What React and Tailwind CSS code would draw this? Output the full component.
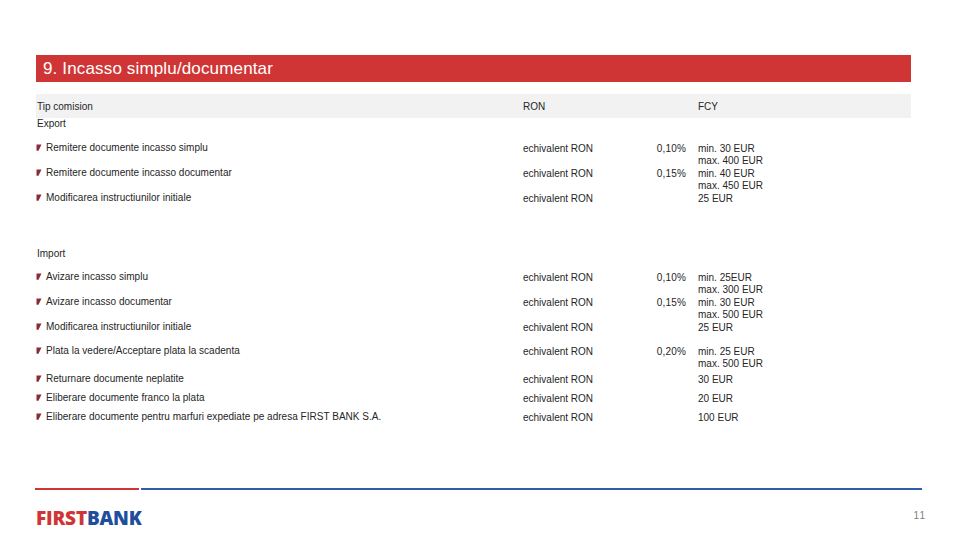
const rowsExport = [
  { name: "Remitere documente incasso simplu", pct: "0,10%", fcy: ["min. 30 EUR", "max. 400 EUR"], h: "h-[25px]" },
  { name: "Remitere documente incasso documentar", pct: "0,15%", fcy: ["min. 40 EUR", "max. 450 EUR"], h: "h-[25px]" },
  { name: "Modificarea instructiunilor initiale", pct: "", fcy: ["25 EUR"], h: "h-[25px]" },
];

const rowsImport = [
  { name: "Avizare incasso simplu", pct: "0,10%", fcy: ["min. 25EUR", "max. 300 EUR"], h: "h-[25px]" },
  { name: "Avizare incasso documentar", pct: "0,15%", fcy: ["min. 30 EUR", "max. 500 EUR"], h: "h-[25px]" },
  { name: "Modificarea instructiunilor initiale", pct: "", fcy: ["25 EUR"], h: "h-[24px]" },
  { name: "Plata la vedere/Acceptare plata la scadenta", pct: "0,20%", fcy: ["min. 25 EUR", "max. 500 EUR"], h: "h-[28px]" },
  { name: "Returnare documente neplatite", pct: "", fcy: ["30 EUR"], h: "h-[19px]" },
  { name: "Eliberare documente franco la plata", pct: "", fcy: ["20 EUR"], h: "h-[19px]" },
  { name: "Eliberare documente pentru marfuri expediate pe adresa FIRST BANK S.A.", pct: "", fcy: ["100 EUR"], h: "h-[19px]" },
];

function Bullet() {
  return (
    <svg width="6" height="7" viewBox="0 0 6 7" className="shrink-0 mt-[2px]">
      <polygon points="0.5,0.5 5.5,0.5 2.5,6.8 0.5,6.8" fill="#8a2c36" />
    </svg>
  );
}

function Row({ row }) {
  return (
    <div className={`grid grid-cols-[487px_117px_46px_1fr] ${row.h} leading-[12.4px]`}>
      <div className="flex items-start gap-[4px] -mt-[1px]">
        <Bullet />
        <span className="tracking-[0.02px]">{row.name}</span>
      </div>
      <div>echivalent RON</div>
      <div className="text-right tracking-[0.2px]">{row.pct}</div>
      <div className="pl-[12px] whitespace-nowrap">
        {row.fcy.map((line) => (
          <div key={line}>{line}</div>
        ))}
      </div>
    </div>
  );
}

export default function App() {
  return (
    <div className="w-[960px] h-[540px] bg-white overflow-hidden flex flex-col pt-[55px] font-['Liberation_Sans',Arial,sans-serif] text-[10px] leading-[12.4px] text-[#262626]">
      <div className="mx-[36px] w-[875px] h-[27px] pt-[1px] bg-[#d03535] flex items-center pl-[7px] text-[17px] tracking-[0.15px] text-white">
        9. Incasso simplu/documentar
      </div>

      <div className="mx-[36px] w-[875px] mt-[12px] h-[24px] pt-[2px] bg-[#f2f2f2] grid grid-cols-[487px_175px_1fr] items-center">
        <div className="pl-[1px]">Tip comision</div>
        <div>RON</div>
        <div>FCY</div>
      </div>

      <div className="mx-[36px] w-[875px] flex flex-col">
        <div className="pl-[1px] h-[25px]">Export</div>
        {rowsExport.map((row, i) => (
          <Row key={i} row={row} />
        ))}
        <div className="pl-[1px] h-[24px] mt-[30px]">Import</div>
        {rowsImport.map((row, i) => (
          <Row key={i} row={row} />
        ))}
      </div>

      <div className="flex-1" />

      <div className="flex items-center gap-[2px] ml-[35px] w-[887px]">
        <div className="w-[104px] h-[2px] bg-[#d03535]" />
        <div className="flex-1 h-[2px] bg-[#2f5da8]" />
      </div>

      <div className="ml-[36px] mr-[34px] mt-[17px] mb-[10px] flex items-center justify-between h-[23px]">
        <div className="font-['Open_Sans',sans-serif] font-extrabold text-[19px] tracking-[-0.2px] leading-none">
          <span className="text-[#d03535]">FIRST</span>
          <span className="text-[#1f4f9c]">BANK</span>
        </div>
        <div className="text-[10px] tracking-[1px] text-[#808080] -mt-[5px]">11</div>
      </div>
    </div>
  );
}
